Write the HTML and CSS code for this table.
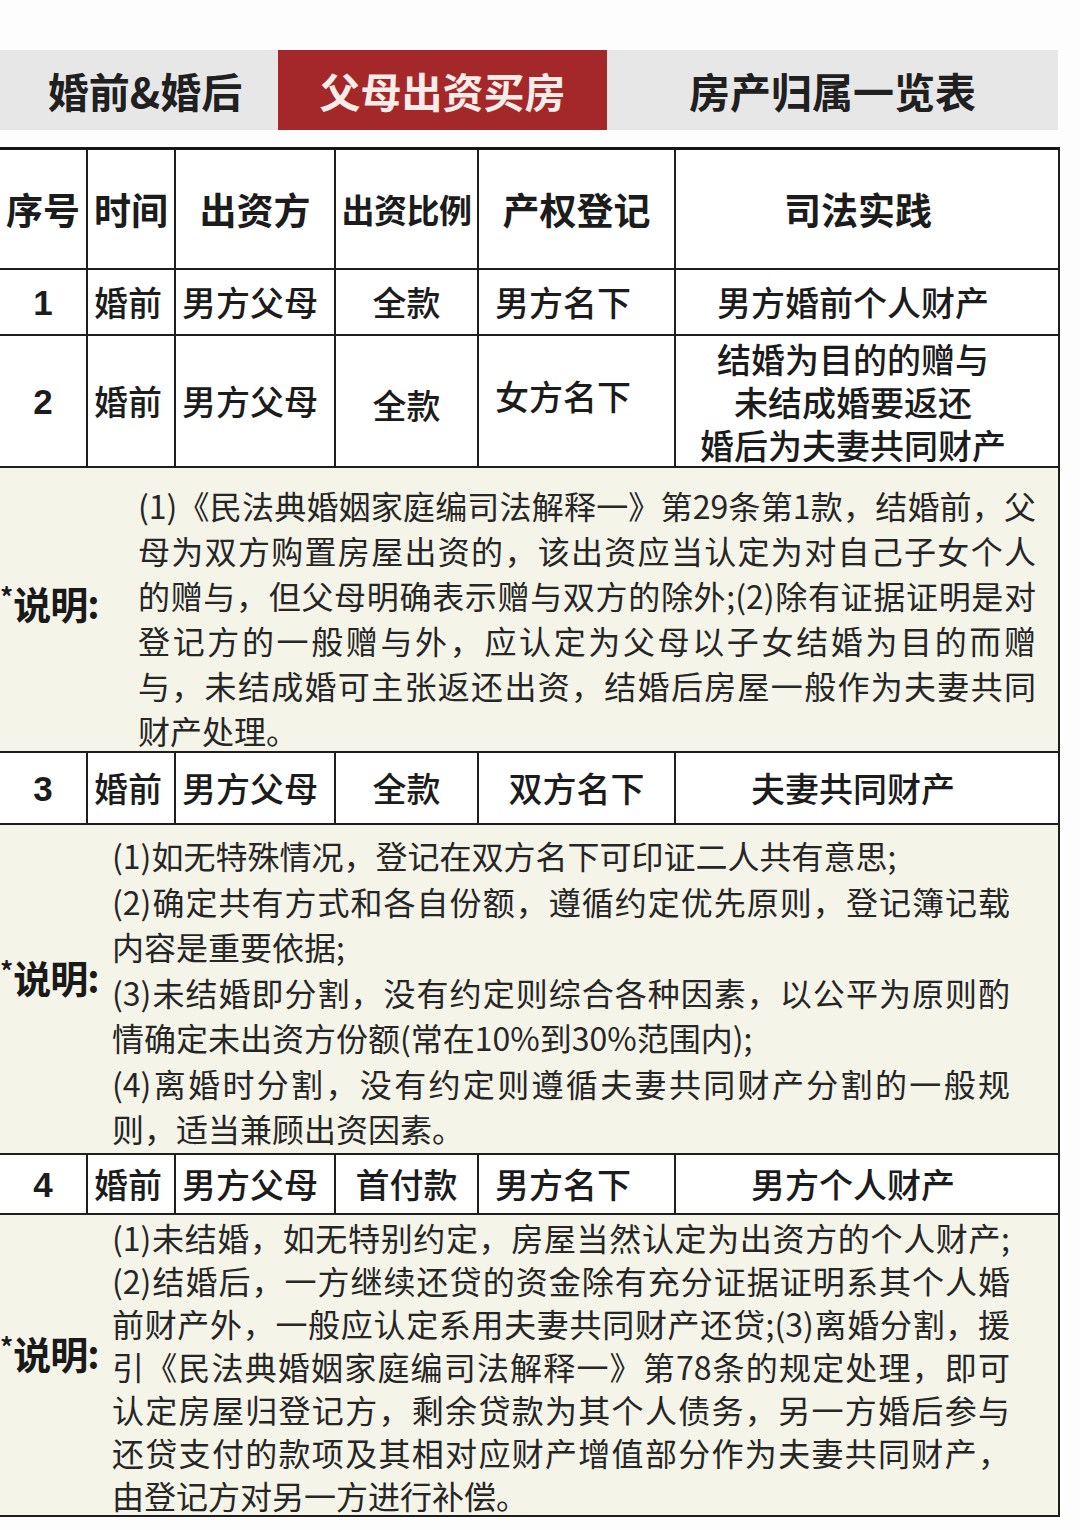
FILE: index.html
```html
<!DOCTYPE html>
<html lang="zh-CN">
<head>
<meta charset="utf-8">
<title>婚前&amp;婚后 父母出资买房 房产归属一览表</title>
<link rel="stylesheet" href="styles.css">
</head>
<body>
<div class="page">
  <div class="banner">
    <div class="banner-item">婚前&amp;婚后</div>
    <div class="banner-item banner-red">父母出资买房</div>
    <div class="banner-item">房产归属一览表</div>
  </div>

  <div class="table">
    <div class="row row-head">
      <div class="cell c-center">序号</div>
      <div class="cell c-center">时间</div>
      <div class="cell c-center">出资方</div>
      <div class="cell c-center narrow">出资比例</div>
      <div class="cell c-center">产权登记</div>
      <div class="cell c-center c-last">司法实践</div>
    </div>

    <div class="row row-1">
      <div class="cell c-center num">1</div>
      <div class="cell c-left">婚前</div>
      <div class="cell c-left">男方父母</div>
      <div class="cell c-center">全款</div>
      <div class="cell c-reg">男方名下</div>
      <div class="cell c-center c-last">男方婚前个人财产</div>
    </div>

    <div class="row row-2">
      <div class="cell c-center num">2</div>
      <div class="cell c-left">婚前</div>
      <div class="cell c-left">男方父母</div>
      <div class="cell c-center down">全款</div>
      <div class="cell c-reg up">女方名下</div>
      <div class="cell c-center c-last multi">结婚为目的的赠与<br>未结成婚要返还<br>婚后为夫妻共同财产</div>
    </div>

    <div class="note note-1">
      <div class="note-label"><span class="star">*</span>说明:</div>
      <div class="note-text">
        <div class="ln full">(1)《民法典婚姻家庭编司法解释一》第29条第1款，结婚前，父</div>
        <div class="ln full">母为双方购置房屋出资的，该出资应当认定为对自己子女个人</div>
        <div class="ln full">的赠与，但父母明确表示赠与双方的除外;(2)除有证据证明是对</div>
        <div class="ln full">登记方的一般赠与外，应认定为父母以子女结婚为目的而赠</div>
        <div class="ln full">与，未结成婚可主张返还出资，结婚后房屋一般作为夫妻共同</div>
        <div class="ln">财产处理。</div>
      </div>
    </div>

    <div class="row row-3">
      <div class="cell c-center num">3</div>
      <div class="cell c-left">婚前</div>
      <div class="cell c-left">男方父母</div>
      <div class="cell c-center">全款</div>
      <div class="cell c-center">双方名下</div>
      <div class="cell c-center c-last">夫妻共同财产</div>
    </div>

    <div class="note note-2">
      <div class="note-label"><span class="star">*</span>说明:</div>
      <div class="note-text">
        <div class="ln">(1)如无特殊情况，登记在双方名下可印证二人共有意思;</div>
        <div class="ln full">(2)确定共有方式和各自份额，遵循约定优先原则，登记簿记载</div>
        <div class="ln">内容是重要依据;</div>
        <div class="ln full">(3)未结婚即分割，没有约定则综合各种因素，以公平为原则酌</div>
        <div class="ln">情确定未出资方份额(常在10%到30%范围内);</div>
        <div class="ln full">(4)离婚时分割，没有约定则遵循夫妻共同财产分割的一般规</div>
        <div class="ln">则，适当兼顾出资因素。</div>
      </div>
    </div>

    <div class="row row-4">
      <div class="cell c-center num">4</div>
      <div class="cell c-left">婚前</div>
      <div class="cell c-left">男方父母</div>
      <div class="cell c-center">首付款</div>
      <div class="cell c-reg">男方名下</div>
      <div class="cell c-center c-last">男方个人财产</div>
    </div>

    <div class="note note-3">
      <div class="note-label"><span class="star">*</span>说明:</div>
      <div class="note-text">
        <div class="ln full">(1)未结婚，如无特别约定，房屋当然认定为出资方的个人财产;</div>
        <div class="ln full">(2)结婚后，一方继续还贷的资金除有充分证据证明系其个人婚</div>
        <div class="ln full">前财产外，一般应认定系用夫妻共同财产还贷;(3)离婚分割，援</div>
        <div class="ln full">引《民法典婚姻家庭编司法解释一》第78条的规定处理，即可</div>
        <div class="ln full">认定房屋归登记方，剩余贷款为其个人债务，另一方婚后参与</div>
        <div class="ln full">还贷支付的款项及其相对应财产增值部分作为夫妻共同财产，</div>
        <div class="ln">由登记方对另一方进行补偿。</div>
      </div>
    </div>
  </div>
</div>
</body>
</html>
```

FILE: styles.css
```css
* {
  box-sizing: border-box;
}

html, body {
  margin: 0;
  padding: 0;
  background: #fdfdfd;
}

body {
  font-family: "Noto Sans CJK SC", "Noto Sans", "Liberation Sans", sans-serif;
  color: #1c1c1c;
  width: 1080px;
  height: 1530px;
  overflow: hidden;
}

.page {
  padding-top: 50px;
}

/* ---------- banner ---------- */
.banner {
  width: 1058px;
  height: 80px;
  background: #e7e7e7;
  display: grid;
  grid-template-columns: 278px 329px 1fr;
}

.banner-item {
  display: flex;
  align-items: center;
  justify-content: center;
  font-size: 41px;
  font-weight: 700;
  color: #202020;
}

.banner-item:first-child {
  padding-left: 12px;
}

.banner-red {
  background: #a4282a;
  color: #f6ece8;
}

/* ---------- table ---------- */
.table {
  margin-top: 17px;
  width: 1060px;
  border-top: 3px solid #161616;
  border-right: 2px solid #1e1e1e;
}

.row {
  display: grid;
  grid-template-columns: 88px 88px 160px 143px 197px 1fr;
  border-bottom: 2px solid #1e1e1e;
  background: #ffffff;
}

.cell {
  border-right: 2px solid #1e1e1e;
  display: flex;
  align-items: center;
  font-size: 34px;
  font-weight: 500;
  line-height: 1;
  white-space: nowrap;
}

.c-last {
  border-right: none;
}

.c-center {
  justify-content: center;
  text-align: center;
}

.c-left {
  justify-content: flex-start;
  padding-left: 6px;
}

.c-reg {
  justify-content: flex-start;
  padding-left: 16px;
}

.c-last.c-center {
  padding-right: 28px;
}

.num {
  font-weight: 700;
  font-family: "Liberation Sans", "Noto Sans CJK SC", sans-serif;
  font-size: 35px;
}

.row-head .cell {
  font-size: 37px;
  font-weight: 700;
}

.row-head .narrow {
  font-size: 33px;
  letter-spacing: -0.5px;
}

.row-head .c-last {
  padding-right: 18px;
}

.row-head { height: 120px; }
.row-1 { height: 66px; }
.row-2 { height: 132px; }
.row-3 { height: 72px; }
.row-4 { height: 60px; }

.down { padding-top: 8px; }
.up { padding-bottom: 10px; }

.multi {
  line-height: 43px;
  white-space: nowrap;
}

/* ---------- notes ---------- */
.note {
  display: flex;
  align-items: center;
  background: #f4f4e8;
  border-bottom: 2px solid #1e1e1e;
  color: #262626;
}

.note-label {
  font-size: 38px;
  font-weight: 700;
  color: #1a1a1a;
  white-space: nowrap;
  line-height: 1;
  letter-spacing: -1px;
}

.star {
  font-size: 26px;
  vertical-align: 12px;
  margin-right: 1px;
}

.note-text {
  font-weight: 400;
  white-space: nowrap;
  align-self: stretch;
  font-size: 32px;
}

.ln.full {
  width: 898px;
  text-align: justify;
  text-align-last: justify;
}

.note-1 {
  height: 285px;
}
.note-1 .note-label {
  width: 138px;
  padding-bottom: 14px;
}
.note-1 .note-text {
  line-height: 45px;
  padding-top: 15px;
}

.note-2 {
  height: 330px;
}
.note-2 .note-label {
  width: 112px;
  padding-bottom: 26px;
}
.note-2 .note-text {
  line-height: 45.5px;
  padding-top: 8px;
}

.note-3 {
  height: 302px;
}
.note-3 .note-label {
  width: 112px;
  padding-bottom: 26px;
}
.note-3 .note-text {
  line-height: 43px;
  padding-top: 1px;
}
```
